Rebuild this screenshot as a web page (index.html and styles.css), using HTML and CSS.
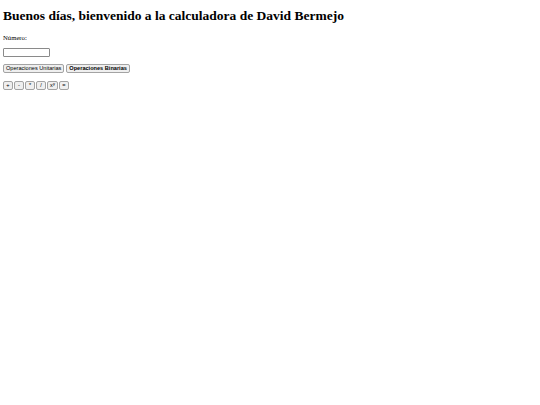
FILE: index.html
```html
<!DOCTYPE html>
<html lang="es">
<head>
<meta charset="utf-8">
<title>Calculadora</title>
<link rel="stylesheet" href="styles.css">
</head>
<body>
<h1 class="title">Buenos días, bienvenido a la calculadora de David Bermejo</h1>
<div class="field">
  <label class="label" for="num">Número:</label>
  <input class="input" id="num" type="text">
</div>
<div class="tabs">
  <button class="btn">Operaciones Unitarias</button>
  <button class="btn btn-active">Operaciones Binarias</button>
</div>
<div class="ops">
  <button class="btn op">+</button>
  <button class="btn op">-</button>
  <button class="btn op">*</button>
  <button class="btn op">/</button>
  <button class="btn op op-wide">x<sup class="sup">y</sup></button>
  <button class="btn op">=</button>
</div>
</body>
</html>
```

FILE: styles.css
```css
html, body {
  background: #ffffff;
}
body {
  margin: 0;
  padding: 3px;
  font-family: "Liberation Serif", "Times New Roman", serif;
  font-size: 6.7px;
  color: #000;
}
.title {
  margin: 5px 0 0 0;
  font-size: 13.5px;
  line-height: 16px;
  font-weight: bold;
  color: #000;
}
.field {
  display: flex;
  flex-direction: column;
  align-items: flex-start;
  gap: 6px;
  margin-top: 10px;
}
.label {
  display: block;
  line-height: 8px;
  color: #000;
}
.input {
  box-sizing: border-box;
  width: 47px;
  height: 9px;
  margin: 0;
  padding: 0;
  border: 1px solid #8a8a8a;
  border-radius: 1px;
  background: #fff;
  font-size: 5.6px;
}
.tabs, .ops {
  display: flex;
  gap: 2px;
  margin-top: 7px;
}
.ops {
  gap: 1px;
  margin-top: 8px;
}
.btn {
  box-sizing: border-box;
  margin: 0;
  height: 9px;
  padding: 0 2px;
  font-family: "Liberation Sans", Arial, sans-serif;
  font-size: 5.6px;
  line-height: 7px;
  color: #000;
  background: #efefef;
  border: 1px solid #a3a3a3;
  border-radius: 2px;
}
.btn-active {
  font-weight: bold;
}
.op {
  width: 10px;
  padding: 0;
  text-align: center;
}
.op-wide {
  width: 11px;
}
.sup {
  font-size: 4px;
  vertical-align: top;
  line-height: 4px;
}
```
